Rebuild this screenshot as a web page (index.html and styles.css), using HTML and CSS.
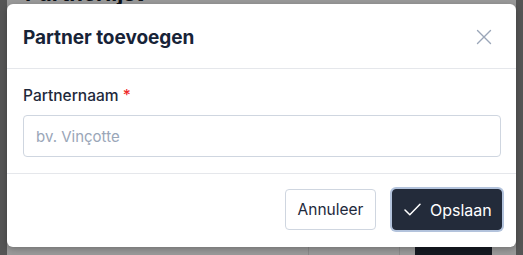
FILE: index.html
```html
<!DOCTYPE html>
<html lang="nl">
<head>
<meta charset="utf-8">
<link rel="stylesheet" href="styles.css">
</head>
<body>
<div class="page">
  <aside class="sidebar"></aside>
  <main class="main">
    <h1 class="page-title">Partnerlijst</h1>
    <div class="page-table">
      <div class="cell c1"></div>
      <div class="cell c2"></div>
      <div class="cell c3"></div>
      <div class="cell c4"></div>
    </div>
  </main>
  <aside class="scrollbar"></aside>
  <div class="overlay"></div>
</div>

<div class="modal" role="dialog" aria-labelledby="modal-title">
  <header class="modal-header">
    <h2 id="modal-title" class="modal-title">Partner toevoegen</h2>
    <button class="close-btn" aria-label="Sluiten">
      <svg width="16" height="16" viewBox="0 0 16 16" fill="none" stroke="currentColor" stroke-width="1.4" stroke-linecap="round"><path d="M1.5 1.5l13 13M14.5 1.5l-13 13"/></svg>
    </button>
  </header>
  <section class="modal-body">
    <label class="field-label" for="partnernaam">Partnernaam <span class="req">*</span></label>
    <input id="partnernaam" class="text-input" type="text" placeholder="bv. Vinçotte">
  </section>
  <footer class="modal-footer">
    <button class="btn btn-secondary">Annuleer</button>
    <button class="btn btn-primary">
      <svg class="check" width="17" height="13" viewBox="0 0 17 13" fill="none" stroke="currentColor" stroke-width="1.5" stroke-linecap="round" stroke-linejoin="round"><path d="M1 7l4.8 4.8L16 1.2"/></svg>
      Opslaan
    </button>
  </footer>
</div>
</body>
</html>
```

FILE: styles.css
```css
* { box-sizing: border-box; }
html, body { margin: 0; padding: 0; }
body {
  width: 523px;
  height: 255px;
  overflow: hidden;
  font-family: Inter, "Noto Sans", "Liberation Sans", sans-serif;
  color: #1e293b;
}
.page {
  position: relative;
  width: 523px;
  height: 255px;
  display: grid;
  grid-template-columns: 7px 1fr 7px;
  background: #fff;
}
.sidebar { background: #8e8e8e; }
.scrollbar { background: #8e8e8e; }
.main {
  padding: 0 0 0 18px;
  display: flex;
  flex-direction: column;
  overflow: hidden;
}
.page-title {
  margin: -18px 0 0;
  font-size: 22px;
  line-height: 22px;
  font-weight: 700;
  color: #111827;
}
.page-title, .page-table { flex-shrink: 0; }
.page-table {
  margin-top: auto;
  height: 8px;
  display: grid;
  grid-template-columns: 284px 91px 15px 77px 1fr;
}
.cell { border-right: 1px solid #e5e5e5; }
.c3 { border-right: none; }
.c4 { background: #232b38; border-right: none; }
.overlay {
  position: absolute;
  inset: 0;
  background: rgba(0, 0, 0, 0.4);
}

.modal {
  position: absolute;
  left: 7px;
  top: 4px;
  width: 509px;
  height: 243px;
  background: #fff;
  border-radius: 6px;
  box-shadow: 0 2px 6px rgba(0, 0, 0, 0.25);
  display: flex;
  flex-direction: column;
}
.modal-header {
  height: 65px;
  padding: 0 24px 0 16px;
  display: flex;
  align-items: center;
  justify-content: space-between;
  border-bottom: 1px solid #e5e7eb;
}
.modal-title {
  margin: 2px 0 0;
  font-size: 19px;
  font-weight: 700;
  color: #172337;
  letter-spacing: -0.05px;
}
.close-btn {
  border: none;
  background: none;
  padding: 0;
  margin-top: 1px;
  color: #9aa6b8;
  display: flex;
}
.modal-body {
  padding: 17px 15px 16px 16px;
  display: flex;
  flex-direction: column;
  border-bottom: 1px solid #e5e7eb;
}
.field-label {
  font-size: 15.5px;
  font-weight: 500;
  color: #1e293b;
  line-height: 20px;
  margin-bottom: 9px;
}
.req { color: #ef2b2b; }
.text-input {
  height: 42px;
  border: 1px solid #cfd6e0;
  border-radius: 4px;
  padding: 0 12px;
  font-family: inherit;
  font-size: 15px;
  color: #1e293b;
}
.text-input::placeholder { color: #9aa6b8; }
.modal-footer {
  flex: 1;
  display: flex;
  justify-content: flex-end;
  align-items: center;
  gap: 16px;
  padding: 0 14px 2px 16px;
}
.btn {
  height: 41px;
  border-radius: 4px;
  font-family: inherit;
  font-size: 16px;
  display: inline-flex;
  align-items: center;
  gap: 9px;
  padding: 0 13px;
}
.btn-secondary {
  background: #fff;
  border: 1px solid #cfd6e0;
  color: #1e293b;
  width: 91px;
  justify-content: center;
  font-size: 15.5px;
}
.btn-primary {
  background: #232b3a;
  border: 1px solid #232b3a;
  color: #fff;
  width: 110px;
  box-shadow: 0 0 0 2px #b3c3dc;
  padding-left: 11px;
}
.check { flex-shrink: 0; }
```
